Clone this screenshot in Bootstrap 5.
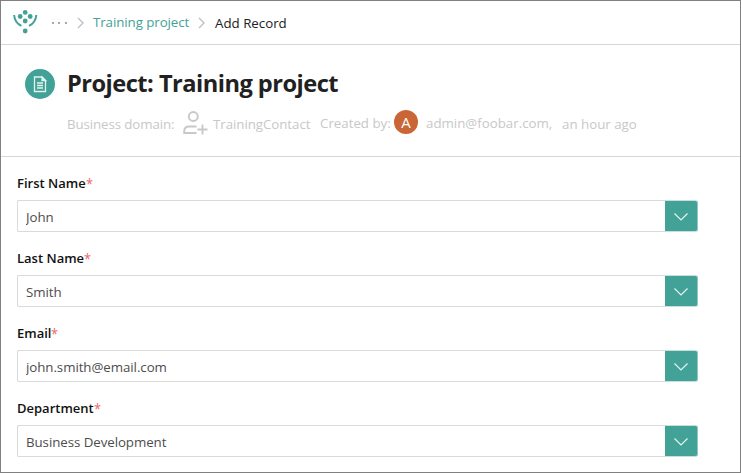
<!DOCTYPE html>
<html lang="en">
<head>
<meta charset="utf-8">
<meta name="viewport" content="width=device-width, initial-scale=1">
<title>Add Record</title>
<link href="https://cdn.jsdelivr.net/npm/bootstrap@5.3.0/dist/css/bootstrap.min.css" rel="stylesheet">
<style>
body{font-family:"Open Sans","Noto Sans",sans-serif;font-size:13.3px;line-height:20px;color:#212121}
.app-frame{height:473px;border:1px solid #808080}
.crumbs{height:44px;border-bottom:1px solid #d6d6d4;padding-left:12px;white-space:nowrap}
.crumbs a{color:#43a297;letter-spacing:-.07px;width:96px;margin-top:-2px}
.crumb-dots{margin-left:12px}
.crumb-sep{margin:1px 10px 0 9px}
.crumb-sep.first{margin:1px 9px 0 9px}
.record-head{height:112px;border-bottom:1px solid #d6d6d4;padding:20px 0 0 24px;white-space:nowrap}
.doc-icon{width:30px;height:30px;background:#43a297;margin-top:4px}
.record-title{font-size:23.6px;font-weight:700;line-height:34px;letter-spacing:-.51px;margin:1px 0 0;color:#212121}
.meta-row{height:26px;margin:10px 0 0 42px;color:#c8c8c8}
.meta-domain{width:107px;letter-spacing:-.1px;padding-top:2px}
.meta-icon{margin:0 5px 0 9px}
.meta-name{width:97px;letter-spacing:-.05px;padding-top:2px}
.meta-by{width:70px;margin-left:10px}
.meta-user{width:126px;margin-left:8px}
.meta-time{margin-left:10px;padding-top:2px}
.avatar{width:24px;height:24px;background:#c96536;color:#fff;font-size:15px;line-height:24px;margin:-2px 0 0 4px}
.record-form{padding:16px 43px 0 16px}
.field{height:75px}
.field .form-label{font-size:13px;font-weight:600;color:#111;height:20px;line-height:20px;margin:0 0 7px}
.req{color:#e9696c;font-size:15px;line-height:18px;margin-top:1px;font-weight:400;display:inline-block;transform:scaleX(.85);transform-origin:left}
.field .form-control{height:32px;padding:1px 8px 0;font-size:13.3px;letter-spacing:-.06px;color:#4d4d4d;border:1px solid #d7dbd9;border-radius:2px 0 0 2px;border-right:0}
.field .btn{width:33px;height:32px;padding:0;background:#43a297;border:1px solid #c9dfdb;border-left:0;border-right-color:#8fc7c0;border-radius:0 3px 3px 0}
.field .btn svg{display:block;margin:1px auto 0}
.field .input-group{width:681px}
</style>
</head>
<body>
<div class="app-frame overflow-hidden bg-white">
  <nav class="crumbs d-flex align-items-center">
    <svg width="26" height="26" viewBox="0 0 26 26" fill="#43a297"><path d="M1.100 5C1.500 10 4.300 14 8.400 15.900M23.300 5C22.900 10 20.100 14 16 15.900" fill="none" stroke="#43a297" stroke-width="2"/><circle cx="12.200" cy="2.400" r="2.400"/><circle cx="7.200" cy="6.500" r="2.400"/><circle cx="17.200" cy="6.500" r="2.400"/><circle cx="12.200" cy="11" r="2.400"/><circle cx="12.200" cy="21" r="2.400"/></svg>
    <svg class="crumb-dots" width="17" height="4" viewBox="0 0 17 4" fill="#a8a8a8"><path d="M1 1h2v2H1zM7 1h2v2H7zM14 1h2v2h-2z"/></svg>
    <svg class="crumb-sep first" width="7" height="12" viewBox="0 0 7 12" fill="none" stroke="#c0c0c0" stroke-width="1.400"><path d="M1 1l5 5-5 5"/></svg>
    <a href="#" class="text-decoration-none">Training project</a>
    <svg class="crumb-sep" width="7" height="12" viewBox="0 0 7 12" fill="none" stroke="#c0c0c0" stroke-width="1.400"><path d="M1 1l5 5-5 5"/></svg>
    <span>Add Record</span>
  </nav>
  <header class="record-head">
    <div class="d-flex">
      <span class="doc-icon rounded-circle d-flex align-items-center justify-content-center"><svg width="14" height="18" viewBox="0 0 14 18" fill="none" stroke="#e4f3f0" stroke-width="1.300"><path d="M1.500 2h7.500l3.500 3.500v11h-11z"/><path d="M9 2v3.500h3.500z" fill="#e4f3f0"/><path d="M4 8h6M4 10.500h6M4 13h6"/></svg></span>
      <h1 class="record-title ms-2 ps-1">Project: Training project</h1>
    </div>
    <div class="meta-row d-flex align-items-center">
      <span class="meta-domain">Business domain:</span>
      <svg class="meta-icon" width="25" height="26" viewBox="0 0 25 26" fill="none" stroke="#c8c8c8" stroke-width="1.900"><circle cx="10.300" cy="6.500" r="4.500"/><path d="M13.500 23H1.200v-1.500q0-5 5-5h7.300M19.500 14.500v10M14.500 19.500h10"/></svg>
      <span class="meta-name">TrainingContact</span>
      <span class="meta-by">Created by:</span>
      <span class="avatar rounded-circle text-center">A</span>
      <span class="meta-user">admin@foobar.com,</span>
      <span class="meta-time">an hour ago</span>
    </div>
  </header>
  <form class="record-form">
    <div class="field"><label class="form-label d-flex" for="first">First Name<span class="req">*</span></label><div class="input-group flex-nowrap"><input id="first" class="form-control" value="John"><button type="button" class="btn" aria-label="Choose"><svg width="16" height="10" viewBox="0 0 16 10" fill="none" stroke="#e4f3f0" stroke-width="1.200"><path d="M1.500 1.500L8 8l6.500-6.500"/></svg></button></div></div>
    <div class="field"><label class="form-label d-flex" for="last">Last Name<span class="req">*</span></label><div class="input-group flex-nowrap"><input id="last" class="form-control" value="Smith"><button type="button" class="btn" aria-label="Choose"><svg width="16" height="10" viewBox="0 0 16 10" fill="none" stroke="#e4f3f0" stroke-width="1.200"><path d="M1.500 1.500L8 8l6.500-6.500"/></svg></button></div></div>
    <div class="field"><label class="form-label d-flex" for="email">Email<span class="req">*</span></label><div class="input-group flex-nowrap"><input id="email" class="form-control" value="john.smith@email.com"><button type="button" class="btn" aria-label="Choose"><svg width="16" height="10" viewBox="0 0 16 10" fill="none" stroke="#e4f3f0" stroke-width="1.200"><path d="M1.500 1.500L8 8l6.500-6.500"/></svg></button></div></div>
    <div class="field"><label class="form-label d-flex" for="dept">Department<span class="req">*</span></label><div class="input-group flex-nowrap"><input id="dept" class="form-control" value="Business Development"><button type="button" class="btn" aria-label="Choose"><svg width="16" height="10" viewBox="0 0 16 10" fill="none" stroke="#e4f3f0" stroke-width="1.200"><path d="M1.500 1.500L8 8l6.500-6.500"/></svg></button></div></div>
  </form>
</div>
<script src="https://cdn.jsdelivr.net/npm/bootstrap@5.3.0/dist/js/bootstrap.bundle.min.js"></script>
</body>
</html>
